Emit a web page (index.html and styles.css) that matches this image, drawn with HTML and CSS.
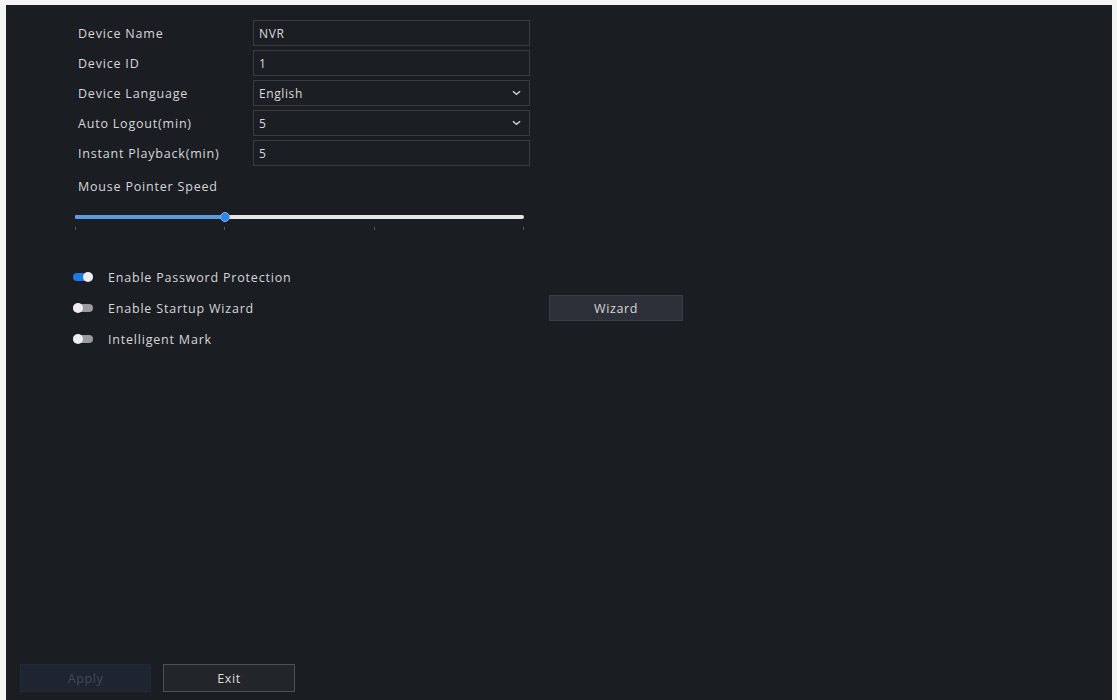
FILE: index.html
```html
<!DOCTYPE html>
<html>
<head>
<meta charset="utf-8">
<link rel="stylesheet" href="styles.css">
</head>
<body>
<div class="screen">
  <div class="form">
    <div class="row"><span class="label">Device Name</span><div class="field">NVR</div></div>
    <div class="row"><span class="label">Device ID</span><div class="field">1</div></div>
    <div class="row"><span class="label">Device Language</span><div class="field select">English<svg class="chev" viewBox="0 0 10 6"><path d="M1 1 L5 4.5 L9 1" fill="none" stroke="#d0d0d0" stroke-width="1.6"/></svg></div></div>
    <div class="row"><span class="label">Auto Logout(min)</span><div class="field select">5<svg class="chev" viewBox="0 0 10 6"><path d="M1 1 L5 4.5 L9 1" fill="none" stroke="#d0d0d0" stroke-width="1.6"/></svg></div></div>
    <div class="row"><span class="label">Instant Playback(min)</span><div class="field">5</div></div>
  </div>
  <div class="speed-label">Mouse Pointer Speed</div>
  <div class="slider">
    <div class="track"><div class="fill"></div><div class="thumb"></div></div>
    <div class="ticks"><i></i><i></i><i></i><i></i></div>
  </div>
  <div class="toggles">
    <div class="trow"><span class="toggle on"></span><span>Enable Password Protection</span></div>
    <div class="trow"><span class="toggle"></span><span class="tlabel">Enable Startup Wizard</span><button class="btn wizard">Wizard</button></div>
    <div class="trow"><span class="toggle"></span><span>Intelligent Mark</span></div>
  </div>
  <div class="spacer"></div>
  <div class="footer">
    <button class="btn apply">Apply</button>
    <button class="btn exit">Exit</button>
  </div>
</div>
</body>
</html>
```
FILE: styles.css
```css
html, body { margin: 0; padding: 0; background: #f4f4f4; }
body { font-family: "Open Sans", "Noto Sans", sans-serif; font-size: 12.5px; color: #d6d7d9; }
.screen {
  margin: 5px 5px 0 6px;
  height: 695px;
  background: #1a1d22;
  box-sizing: border-box;
  padding: 15px 0 8px 0;
  display: flex;
  flex-direction: column;
}
.form { display: flex; flex-direction: column; gap: 4px; padding-left: 72px; }
.row { display: flex; align-items: center; height: 26px; }
.label { width: 175px; letter-spacing: 0.8px; position: relative; top: 0; }
.field {
  width: 277px; height: 26px; box-sizing: border-box;
  border: 1px solid #393c41; background: #1b1e22;
  display: flex; align-items: center; justify-content: space-between;
  padding: 0 8px 0 5px; font-size: 12px; letter-spacing: 0.6px; color: #dcdcdc;
}
.chev { width: 9px; height: 6px; }
.speed-label { margin: 12px 0 0 72px; letter-spacing: 0.8px; }
.slider { margin: 20px 0 0 69px; width: 449px; }
.track { position: relative; height: 4px; background: #e6e6e6; border-radius: 2px; }
.fill { width: 150px; height: 4px; background: #5a9be0; border-radius: 2px; }
.thumb {
  position: absolute; left: 145px; top: -3px; width: 10px; height: 10px;
  border-radius: 50%; background: #2f86e6; border: 1px solid #7ab4f0; box-sizing: border-box;
}
.ticks { display: flex; justify-content: space-between; margin-top: 8px; }
.ticks i { width: 1px; height: 3px; background: #555960; }
.toggles { margin: 38px 0 0 67px; display: flex; flex-direction: column; gap: 13px; }
.trow { display: flex; align-items: center; height: 18px; letter-spacing: 0.8px; }
.toggle {
  width: 20px; height: 8px; border-radius: 4px; background: #9a9b9e;
  margin-right: 15px; position: relative;
}
.toggle::after {
  content: ""; position: absolute; left: 0; top: -1px; width: 10px; height: 10px;
  border-radius: 50%; background: #eeeeee;
}
.toggle.on { background: #1f7ae8; }
.toggle.on::after { left: auto; right: 0; }
.tlabel { width: 441px; }
.btn {
  font-family: inherit; font-size: 12.5px; letter-spacing: 0.6px;
  box-sizing: border-box; cursor: default;
}
.wizard {
  width: 134px; height: 26px; background: #2d3038; border: 1px solid #3b3e46;
  color: #d6d7d9;
}
.spacer { flex: 1; }
.footer { display: flex; gap: 12px; padding-left: 14px; }
.apply { width: 131px; height: 28px; background: #1e2430; border: 1px solid #23293a; color: #444b5a; }
.exit { width: 132px; height: 28px; background: #22252a; border: 1px solid #4d5056; color: #dcdcdc; }
```
